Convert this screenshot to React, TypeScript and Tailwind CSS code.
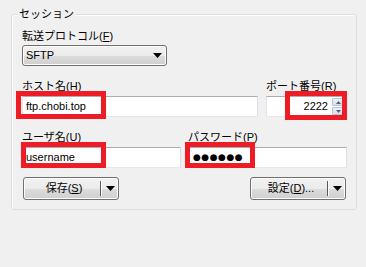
const font = "font-['Liberation_Sans','Noto_Sans_CJK_JP',sans-serif]";

function Acc({ k }: { k: string }) {
  return (
    <>
      (<span className="underline underline-offset-1">{k}</span>)
    </>
  );
}

function Label({ children }: { children: React.ReactNode }) {
  return <div className="h-[15px] text-[11px] leading-[15px] text-black whitespace-nowrap">{children}</div>;
}

function TextBox({ w, children }: { w: string; children?: React.ReactNode }) {
  return (
    <div
      className={`${w} h-[21px] bg-white border border-[#e3e9ef] border-t-[#abadb3] border-l-[#e2e3ea] border-r-[#dbdfe6] flex items-center px-[3px] text-[11px] text-black relative`}
    >
      {children}
    </div>
  );
}

function Arrow() {
  return (
    <svg width="9" height="5" viewBox="0 0 9 5">
      <path d="M0 0h9L4.5 5z" fill="#000" />
    </svg>
  );
}

function SplitButton({ label }: { label: React.ReactNode }) {
  return (
    <div className="w-[96px] h-[23px] rounded-[3px] border border-[#707070] bg-[linear-gradient(#f2f2f2_0%,#ebebeb_50%,#dddddd_51%,#cfcfcf_100%)] shadow-[inset_0_0_0_1px_#fcfcfc] flex items-center text-[11px] text-black">
      <div className="flex-1 text-center pl-[4px]">{label}</div>
      <div className="w-[2px] h-[15px] bg-[#5a5a5a] border-r border-white" />
      <div className="w-[16px] flex justify-center">
        <Arrow />
      </div>
    </div>
  );
}

function Spin() {
  return (
    <div className="absolute right-[2px] top-[1px] flex flex-col gap-[1px]">
      {[0, 1].map((i) => (
        <div
          key={i}
          className="w-[12px] h-[8px] rounded-[1px] border border-[#b8c3d4] bg-[linear-gradient(#eef2f8,#d8e0ec)] flex items-center justify-center"
        >
          <svg width="5" height="3" viewBox="0 0 5 3">
            <path d={i === 0 ? "M0 3h5L2.5 0z" : "M0 0h5L2.5 3z"} fill="#4d6185" />
          </svg>
        </div>
      ))}
    </div>
  );
}

export default function App() {
  return (
    <div className={`w-[366px] h-[267px] bg-[#f0f0f0] relative overflow-hidden pt-[14px] pl-[11px] ${font}`}>
      <div className="w-[346px] h-[196px] border border-[#d5dfe5] rounded-[3px] shadow-[inset_1px_1px_0_#ffffff] relative pl-[10px] pr-[10px]">
        <div className="absolute left-[5px] top-[-8px] px-[2px] bg-[#f0f0f0] text-[11px] leading-[15px] text-black">
          セッション
        </div>

        <div className="mt-[14px]">
          <Label>
            転送プロトコル<Acc k="F" />
          </Label>
        </div>
        <div className="mt-[1px] w-[145px] h-[21px] rounded-[3px] border border-[#707070] bg-[linear-gradient(#f2f2f2_0%,#ebebeb_50%,#dddddd_51%,#cfcfcf_100%)] shadow-[inset_0_0_0_1px_#fcfcfc] flex items-center justify-between pl-[3px] pr-[4px] text-[11px] text-black">
          <span>SFTP</span>
          <Arrow />
        </div>

        <div className="mt-[13px] flex gap-[8px]">
          <div className="flex flex-col gap-[2px]">
            <Label>
              ホスト名<Acc k="H" />
            </Label>
            <TextBox w="w-[236px]">ftp.chobi.top</TextBox>
          </div>
          <div className="flex flex-col gap-[2px]">
            <Label>
              ポート番号<Acc k="R" />
            </Label>
            <TextBox w="w-[81px]">
              <span className="ml-auto mr-[15px]">2222</span>
              <Spin />
            </TextBox>
          </div>
        </div>

        <div className="mt-[13px] flex gap-[7px]">
          <div className="flex flex-col gap-[2px]">
            <Label>
              ユーザ名<Acc k="U" />
            </Label>
            <TextBox w="w-[159px]">username</TextBox>
          </div>
          <div className="flex flex-col gap-[2px]">
            <Label>
              パスワード<Acc k="P" />
            </Label>
            <TextBox w="w-[159px]">
              <span className="font-['DejaVu_Sans',sans-serif] text-[9px] leading-none tracking-[0.5px] pl-[1px]">●●●●●●</span>
            </TextBox>
          </div>
        </div>

        <div className="mt-[9px] flex justify-between pl-[1px]">
          <SplitButton
            label={
              <>
                保存<Acc k="S" />
              </>
            }
          />
          <SplitButton
            label={
              <>
                設定<Acc k="D" />...
              </>
            }
          />
        </div>
      </div>

      <div className="absolute left-[16px] top-[91px] w-[90px] h-[28px] border-[5px] border-[#ee1c24]" />
      <div className="absolute left-[285px] top-[91px] w-[62px] h-[29px] border-[5px] border-[#ee1c24]" />
      <div className="absolute left-[21px] top-[142px] w-[85px] h-[26px] border-[5px] border-[#ee1c24]" />
      <div className="absolute left-[185px] top-[142px] w-[70px] h-[26px] border-[5px] border-[#ee1c24]" />
    </div>
  );
}
